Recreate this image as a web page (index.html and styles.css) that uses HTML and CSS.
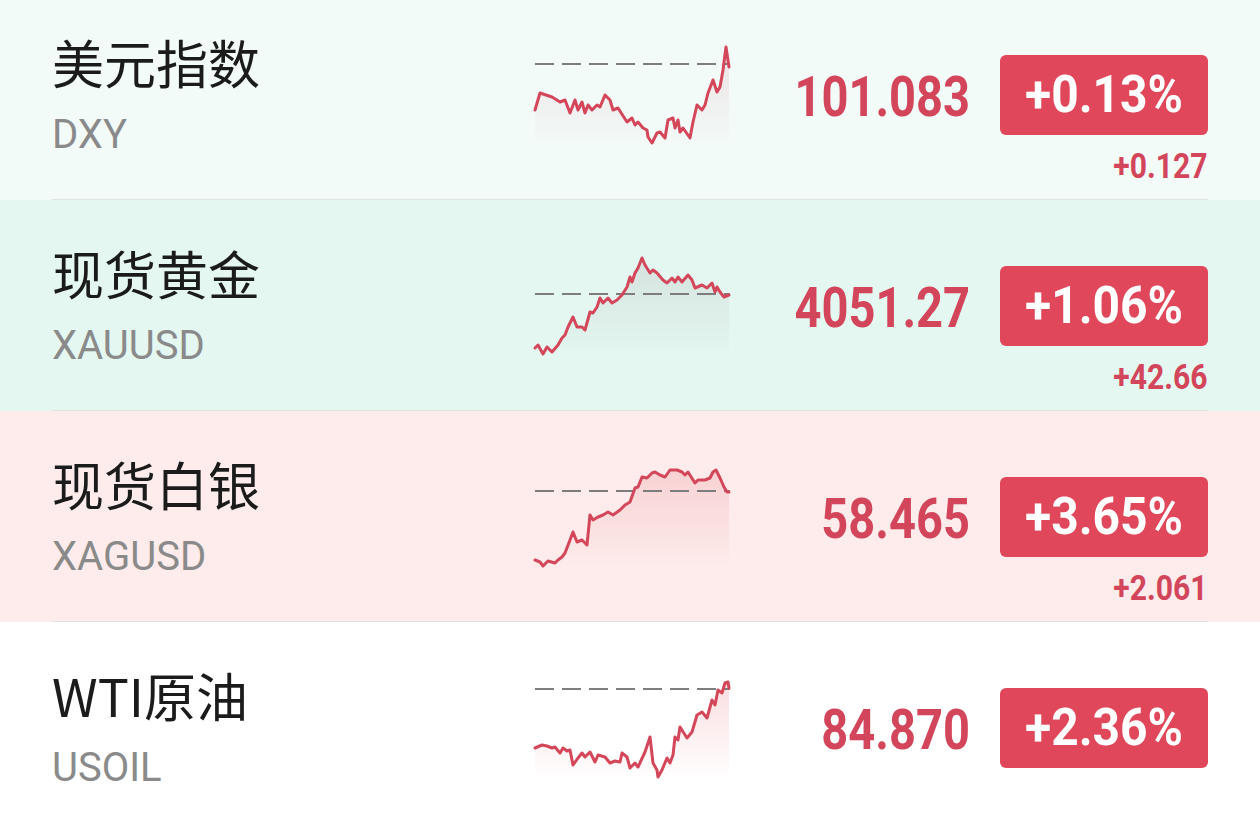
FILE: index.html
```html
<!DOCTYPE html>
<html lang="zh-CN">
<head>
<meta charset="utf-8">
<title>行情</title>
<link rel="stylesheet" href="styles.css">
</head>
<body>
<svg class="defs" width="0" height="0" aria-hidden="true">
  <defs>
    <linearGradient id="area" x1="0" y1="0" x2="0" y2="1">
      <stop offset="0" stop-color="#c98a90" stop-opacity="0.22"/>
      <stop offset="1" stop-color="#c98a90" stop-opacity="0"/>
    </linearGradient>
    <linearGradient id="area-grey" x1="0" y1="0" x2="0" y2="1">
      <stop offset="0" stop-color="#b9bdbb" stop-opacity="0.35"/>
      <stop offset="1" stop-color="#b9bdbb" stop-opacity="0"/>
    </linearGradient>
    <linearGradient id="area-pink" x1="0" y1="0" x2="0" y2="1">
      <stop offset="0" stop-color="#f0a0a6" stop-opacity="0.35"/>
      <stop offset="1" stop-color="#f0a0a6" stop-opacity="0"/>
    </linearGradient>
  </defs>
</svg>

<ul class="quotes">
  <li class="quote quote--mint-light">
    <div class="quote__inner">
      <div class="quote__name">
        <div class="quote__title">美元指数</div>
        <div class="quote__code">DXY</div>
      </div>
      <div class="quote__chart">
        <svg viewBox="0 0 195 100" width="195" height="100">
          <polygon fill="url(#area)" points="0,64 5,47 17,51 25,56 30,54 35,67 40,54 43,64 47,56 50,67 53,59 57,64 62,59 65,61 70,49 75,54 78,64 83,62 92,76 97,72 100,79 103,76 108,82 112,84 113,91 117,97 122,87 125,86 130,92 133,74 138,72 140,82 143,74 145,86 148,82 155,92 158,76 162,59 167,64 170,59 173,47 178,34 182,46 185,41 188,24 191,1 194,21 194,100 0,100"/>
          <line class="base" x1="0" y1="18" x2="195" y2="18"/>
          <polyline class="trend" points="0,64 5,47 17,51 25,56 30,54 35,67 40,54 43,64 47,56 50,67 53,59 57,64 62,59 65,61 70,49 75,54 78,64 83,62 92,76 97,72 100,79 103,76 108,82 112,84 113,91 117,97 122,87 125,86 130,92 133,74 138,72 140,82 143,74 145,86 148,82 155,92 158,76 162,59 167,64 170,59 173,47 178,34 182,46 185,41 188,24 191,1 194,21"/>
        </svg>
      </div>
      <div class="quote__price"><span class="num">101.083</span></div>
      <div class="quote__change">
        <div class="badge"><span class="num">+0.13%</span></div>
        <div class="delta"><span class="num">+0.127</span></div>
      </div>
    </div>
  </li>

  <li class="quote quote--mint">
    <div class="quote__inner">
      <div class="quote__name">
        <div class="quote__title">现货黄金</div>
        <div class="quote__code">XAUUSD</div>
      </div>
      <div class="quote__chart">
        <svg viewBox="0 0 195 100" width="195" height="100">
          <polygon fill="url(#area-grey)" points="0,91 3,88 8,97 12,90 17,95 23,88 27,81 30,78 33,70 38,60 42,70 47,70 50,73 55,55 58,56 62,50 65,41 68,46 73,41 77,46 82,43 87,38 92,30 95,20 97,25 100,16 103,11 107,1 110,8 115,16 118,13 122,16 128,23 132,26 137,21 140,25 143,20 147,25 153,18 157,23 160,31 167,28 172,31 177,26 180,35 182,30 185,35 189,40 194,38 194,100 0,100"/>
          <line class="base" x1="0" y1="37" x2="195" y2="37"/>
          <polyline class="trend" points="0,91 3,88 8,97 12,90 17,95 23,88 27,81 30,78 33,70 38,60 42,70 47,70 50,73 55,55 58,56 62,50 65,41 68,46 73,41 77,46 82,43 87,38 92,30 95,20 97,25 100,16 103,11 107,1 110,8 115,16 118,13 122,16 128,23 132,26 137,21 140,25 143,20 147,25 153,18 157,23 160,31 167,28 172,31 177,26 180,35 182,30 185,35 189,40 194,38"/>
        </svg>
      </div>
      <div class="quote__price"><span class="num">4051.27</span></div>
      <div class="quote__change">
        <div class="badge"><span class="num">+1.06%</span></div>
        <div class="delta"><span class="num">+42.66</span></div>
      </div>
    </div>
  </li>

  <li class="quote quote--rose">
    <div class="quote__inner">
      <div class="quote__name">
        <div class="quote__title">现货白银</div>
        <div class="quote__code">XAGUSD</div>
      </div>
      <div class="quote__chart">
        <svg viewBox="0 0 195 100" width="195" height="100">
          <polygon fill="url(#area-pink)" points="0,92 5,94 8,98 13,93 20,95 23,92 27,89 30,85 35,72 38,64 42,74 47,72 52,77 55,47 58,52 63,49 68,47 73,44 78,47 85,42 90,37 95,34 100,20 103,19 107,9 112,10 117,5 120,4 125,7 130,9 135,2 142,2 147,4 150,7 153,4 160,15 163,12 170,12 175,10 178,4 181,2 185,10 189,19 192,24 194,24 194,100 0,100"/>
          <line class="base" x1="0" y1="23" x2="195" y2="23"/>
          <polyline class="trend" points="0,92 5,94 8,98 13,93 20,95 23,92 27,89 30,85 35,72 38,64 42,74 47,72 52,77 55,47 58,52 63,49 68,47 73,44 78,47 85,42 90,37 95,34 100,20 103,19 107,9 112,10 117,5 120,4 125,7 130,9 135,2 142,2 147,4 150,7 153,4 160,15 163,12 170,12 175,10 178,4 181,2 185,10 189,19 192,24 194,24"/>
        </svg>
      </div>
      <div class="quote__price"><span class="num">58.465</span></div>
      <div class="quote__change">
        <div class="badge"><span class="num">+3.65%</span></div>
        <div class="delta"><span class="num">+2.061</span></div>
      </div>
    </div>
  </li>

  <li class="quote quote--white">
    <div class="quote__inner">
      <div class="quote__name">
        <div class="quote__title">WTI原油</div>
        <div class="quote__code">USOIL</div>
      </div>
      <div class="quote__chart">
        <svg viewBox="0 0 195 100" width="195" height="100">
          <polygon fill="url(#area-pink)" points="0,69 7,66 12,67 17,69 20,68 25,74 28,69 32,72 35,71 38,86 43,79 47,74 50,78 55,73 60,83 63,76 70,78 75,84 80,82 85,83 87,74 92,78 95,89 100,84 103,88 110,73 115,58 118,84 122,91 123,98 127,91 132,79 135,84 138,76 140,58 143,61 145,48 152,59 157,53 162,36 167,33 172,39 177,21 180,26 183,11 187,14 190,4 193,3 194,9 194,100 0,100"/>
          <line class="base" x1="0" y1="10" x2="195" y2="10"/>
          <polyline class="trend" points="0,69 7,66 12,67 17,69 20,68 25,74 28,69 32,72 35,71 38,86 43,79 47,74 50,78 55,73 60,83 63,76 70,78 75,84 80,82 85,83 87,74 92,78 95,89 100,84 103,88 110,73 115,58 118,84 122,91 123,98 127,91 132,79 135,84 138,76 140,58 143,61 145,48 152,59 157,53 162,36 167,33 172,39 177,21 180,26 183,11 187,14 190,4 193,3 194,9"/>
        </svg>
      </div>
      <div class="quote__price"><span class="num">84.870</span></div>
      <div class="quote__change">
        <div class="badge"><span class="num">+2.36%</span></div>
      </div>
    </div>
  </li>
</ul>
</body>
</html>
```

FILE: styles.css
```css
html, body {
  margin: 0;
  padding: 0;
  background: #ffffff;
}

body {
  width: 1260px;
  height: 830px;
  overflow: hidden;
  font-family: "Noto Sans", "Noto Sans CJK SC", sans-serif;
}

.defs {
  position: absolute;
  width: 0;
  height: 0;
}

.quotes {
  list-style: none;
  margin: -11px 0 0 0;
  padding: 0;
}

.quote {
  height: 211px;
}

.quote--mint-light { background: #f3fbf9; }
.quote--mint { background: #e4f7f1; }
.quote--rose { background: #fdeceb; }
.quote--white { background: #ffffff; }

.quote__inner {
  margin: 0 52px;
  height: 210px;
  border-bottom: 1px solid #dfe3e2;
  display: grid;
  grid-template-columns: 483px 195px 270px 208px;
}

.quote--white .quote__inner {
  border-bottom: none;
}

/* name + ticker */
.quote__name {
  padding-top: 42px;
}

.quote__title {
  font-family: "Noto Sans CJK SC", "Noto Sans", sans-serif;
  font-size: 52px;
  line-height: 62px;
  color: #1b1b1b;
}

.quote__code {
  margin-top: 20px;
  font-family: "Roboto", "Noto Sans", sans-serif;
  font-size: 40px;
  line-height: 44px;
  color: #8a8a8a;
}

/* sparkline */
.quote__chart {
  padding-top: 57px;
}

.quote__chart svg {
  display: block;
  overflow: visible;
}

.base {
  stroke: #7d7d7d;
  stroke-width: 2;
  stroke-dasharray: 19 8;
}

.trend {
  fill: none;
  stroke: #d4465a;
  stroke-width: 3;
  stroke-linejoin: round;
  stroke-linecap: round;
}

/* figures: condensed bold digits */
.quote__price,
.badge,
.delta {
  font-family: "Roboto", "Noto Sans", sans-serif;
  font-weight: 700;
}

.num {
  display: inline-block;
  transform-origin: right center;
}

.quote__price {
  padding-top: 76px;
  padding-right: 30px;
  text-align: right;
  font-size: 56px;
  line-height: 64px;
  color: #d3455a;
}

.quote__price .num {
  transform: scaleX(0.84);
}

.quote__change {
  padding-top: 66px;
  display: flex;
  flex-direction: column;
  align-items: flex-end;
}

.badge {
  width: 208px;
  height: 80px;
  border-radius: 6px;
  background: #e0475a;
  color: #ffffff;
  font-size: 51px;
  line-height: 80px;
  text-align: center;
}

.badge .num {
  transform: scaleX(0.94);
  transform-origin: center center;
}

.delta {
  margin-top: 12px;
  font-size: 35px;
  line-height: 40px;
  color: #d3455a;
}

.delta .num {
  transform: scaleX(0.86);
}
```
